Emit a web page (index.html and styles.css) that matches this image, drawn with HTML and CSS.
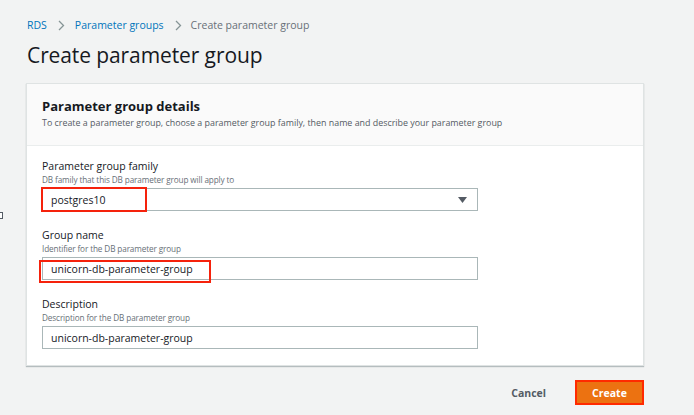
FILE: index.html
```html
<!DOCTYPE html>
<html>
<head>
<meta charset="utf-8">
<link rel="stylesheet" href="styles.css">
</head>
<body>
<div class="edge-box"></div>
<div class="page">
  <nav class="crumbs">
    <a class="crumb-link">RDS</a>
    <svg class="chev" width="7" height="11" viewBox="0 0 7 11"><path d="M1 1l4.5 4.5L1 10" fill="none" stroke="#879596" stroke-width="1.3"/></svg>
    <a class="crumb-link">Parameter groups</a>
    <svg class="chev" width="7" height="11" viewBox="0 0 7 11"><path d="M1 1l4.5 4.5L1 10" fill="none" stroke="#879596" stroke-width="1.3"/></svg>
    <span class="crumb-current">Create parameter group</span>
  </nav>
  <h1 class="title">Create parameter group</h1>

  <section class="card">
    <header class="card-header">
      <h2 class="card-title">Parameter group details</h2>
      <p class="card-desc">To create a parameter group, choose a parameter group family, then name and describe your parameter group</p>
    </header>
    <div class="card-body">
      <div class="field">
        <div class="label">Parameter group family</div>
        <div class="hint">DB family that this DB parameter group will apply to</div>
        <div class="input select">
          <span class="value">postgres10</span>
          <svg class="caret" width="9" height="6" viewBox="0 0 9 6"><path d="M0 0h9L4.5 6z" fill="#545b64"/></svg>
          <span class="mark mark-family"></span>
        </div>
      </div>
      <div class="field">
        <div class="label">Group name</div>
        <div class="hint">Identifier for the DB parameter group</div>
        <div class="input">
          <span class="value">unicorn-db-parameter-group</span>
          <span class="mark mark-name"></span>
        </div>
      </div>
      <div class="field">
        <div class="label">Description</div>
        <div class="hint">Description for the DB parameter group</div>
        <div class="input">
          <span class="value">unicorn-db-parameter-group</span>
        </div>
      </div>
    </div>
  </section>

  <div class="actions">
    <button class="btn-cancel">Cancel</button>
    <button class="btn-create">Create</button>
  </div>
</div>
</body>
</html>
```

FILE: styles.css
```css
* { box-sizing: border-box; }
html, body {
  margin: 0;
  padding: 0;
  background: #f2f3f3;
  font-family: "Open Sans", "Noto Sans", "Liberation Sans", sans-serif;
  color: #16191f;
  width: 694px;
  height: 415px;
  overflow: hidden;
  position: relative;
}
.edge-box {
  position: absolute;
  left: -4px;
  top: 212px;
  width: 7px;
  height: 7px;
  border: 1px solid #545b64;
  background: #fff;
}
.page {
  padding: 18px 0 0 26px;
  width: 646px;
}
.crumbs {
  display: flex;
  align-items: center;
  height: 14px;
  font-size: 10.5px;
  line-height: 14px;
}
.crumb-link {
  color: #0073bb;
  margin-left: 1px;
}
.chev { margin: 0 9px 0 11px; }
.crumb-current { color: #687078; }
.title {
  margin: 8px 0 0 1px;
  font-size: 21px;
  line-height: 30px;
  font-weight: 400;
  letter-spacing: -0.1px;
  color: #16191f;
}
.card {
  margin-top: 13px;
  width: 618px;
  background: #fff;
  border: 1px solid #dfe3e3;
  box-shadow: 0 1px 1px rgba(0,28,36,0.25);
}
.card-header {
  background: #fafafa;
  border-bottom: 1px solid #eaeded;
  padding: 14px 15px 15px;
  height: 62px;
}
.card-title {
  margin: 0;
  font-size: 13px;
  line-height: 16px;
  font-weight: 700;
}
.card-desc {
  margin: 3px 0 0;
  font-size: 8.9px;
  line-height: 11px;
  color: #545b64;
}
.card-body {
  padding: 13px 15px 16px;
}
.field + .field { margin-top: 17px; }
.label {
  font-size: 10.5px;
  line-height: 14px;
  font-weight: 500;
  color: #16191f;
}
.hint {
  margin-top: 1px;
  font-size: 8.2px;
  line-height: 11px;
  letter-spacing: -0.12px;
  color: #687078;
}
.input {
  position: relative;
  margin-top: 3px;
  width: 436px;
  height: 23px;
  border: 1px solid #aab7b8;
  background: #fff;
  display: flex;
  align-items: center;
  padding-left: 8px;
  font-size: 10.5px;
}
.value { color: #16191f; font-weight: 500; }
.select { justify-content: space-between; padding-right: 10px; }
.caret { display: block; }
.mark {
  position: absolute;
  border: 2px solid #f5220c;
}
.mark-family {
  left: -2px;
  top: -2px;
  width: 106px;
  height: 25px;
}
.mark-name {
  left: -4px;
  top: 2px;
  width: 172px;
  height: 23px;
}
.actions {
  display: flex;
  justify-content: flex-end;
  align-items: center;
  margin-top: 14px;
  width: 618px;
}
.btn-cancel {
  background: none;
  border: none;
  font-family: inherit;
  font-size: 10.5px;
  font-weight: 700;
  color: #545b64;
  padding: 0;
  margin-right: 29px;
}
.btn-create {
  width: 69px;
  height: 25px;
  background: #ec7211;
  border: 2px solid #ff2a00;
  color: #fff;
  font-family: inherit;
  font-size: 10.5px;
  font-weight: 700;
  padding: 0;
}
```
